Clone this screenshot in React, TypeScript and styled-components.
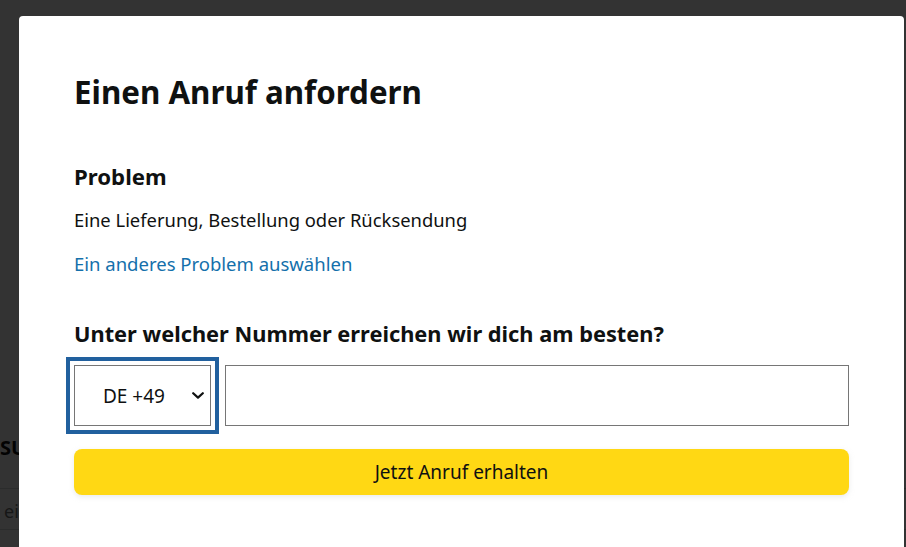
import styled, { createGlobalStyle } from "styled-components";

const GlobalStyle = createGlobalStyle`
	html, body {
		margin: 0;
		padding: 0;
		height: 100%;
		overflow: hidden;
		background: #fff;
		font-family: "Noto Sans", "Liberation Sans", sans-serif;
		color: #0f1111;
	}
	* {
		box-sizing: border-box;
	}
`;

const Chevron = () => (
	<svg width="12" height="7" viewBox="0 0 12 7" fill="none">
		<path
			d="M1.2 1.2 6 5.6l4.8-4.4"
			stroke="#0f1111"
			strokeWidth="2.2"
			strokeLinecap="round"
			strokeLinejoin="round"
		/>
	</svg>
);

export default function App() {
	return (
		<>
			<GlobalStyle />
			{/* page behind the dialog, mostly hidden by it */}
			<Page>
				<PageHeading>SUCHE</PageHeading>
				<SearchField>eingeben</SearchField>
			</Page>
			<Backdrop />
			<Dialog role="dialog" aria-modal="true">
				<Title>Einen Anruf anfordern</Title>
				<SectionTitle>Problem</SectionTitle>
				<Body>Eine Lieferung, Bestellung oder Rücksendung</Body>
				<TextLink href="#">Ein anderes Problem auswählen</TextLink>
				<Question>Unter welcher Nummer erreichen wir dich am besten?</Question>
				<PhoneRow>
					<CountrySelect type="button" $focused>
						<span>DE +49</span>
						<Chevron />
					</CountrySelect>
					<PhoneInput type="tel" aria-label="Telefonnummer" />
				</PhoneRow>
				<PrimaryButton type="button">Jetzt Anruf erhalten</PrimaryButton>
			</Dialog>
		</>
	);
}

const Page = styled.main`
	padding-top: 434px;
`;

const PageHeading = styled.h2`
	margin: 0 0 27px;
	font-size: 20px;
	font-weight: 700;
	color: #0f1111;
`;

const SearchField = styled.div`
	height: 42px;
	border-top: 1px solid #d5d9d9;
	border-bottom: 1px solid #d5d9d9;
	padding: 10px 4px;
	font-size: 18px;
	color: #6f7373;
`;

const Backdrop = styled.div`
	position: fixed;
	inset: 0;
	background: rgba(0, 0, 0, 0.8);
`;

const Dialog = styled.section`
	position: fixed;
	top: 16px;
	left: 19px;
	width: 885px;
	min-height: 600px;
	display: flex;
	flex-direction: column;
	align-items: flex-start;
	padding: 56px 55px 40px;
	background: #fff;
	border-radius: 4px 4px 0 0;
`;

const Title = styled.h1`
	margin: 0;
	font-size: 31.3px;
	line-height: 40px;
	font-weight: 700;
	color: #0f1111;
`;

const SectionTitle = styled.h2`
	margin: 51px 0 0;
	font-size: 22.2px;
	line-height: 28px;
	font-weight: 700;
`;

const Body = styled.p`
	margin: 17px 0 0;
	font-size: 18.4px;
	line-height: 24px;
`;

const TextLink = styled.a`
	margin-top: 20px;
	font-size: 18.5px;
	line-height: 24px;
	color: #1470ab;
	text-decoration: none;
`;

const Question = styled.h2`
	margin: 44px 0 0;
	font-size: 21.8px;
	line-height: 28px;
	font-weight: 700;
`;

const PhoneRow = styled.div`
	margin-top: 17px;
	width: 100%;
	display: flex;
	gap: 14px;
`;

const CountrySelect = styled.button<{ $focused?: boolean }>`
	flex: 0 0 137px;
	height: 61px;
	display: flex;
	align-items: center;
	justify-content: space-between;
	padding: 0 6px 0 28px;
	background: #fff;
	border: 1px solid #767676;
	border-radius: 0;
	font-family: inherit;
	font-size: 19px;
	color: #0f1111;
	box-shadow: ${(p) =>
		p.$focused ? "0 0 0 4px #fff, 0 0 0 8px #21609e" : "none"};
`;

const PhoneInput = styled.input`
	flex: 1;
	height: 61px;
	border: 1px solid #767676;
	border-radius: 0;
	padding: 0 12px;
	font-family: inherit;
	font-size: 18px;
	outline: none;
`;

const PrimaryButton = styled.button`
	margin-top: 23px;
	width: 100%;
	height: 46px;
	border: none;
	border-radius: 8px;
	background: #ffd814;
	box-shadow: 0 2px 5px 0 rgba(213, 217, 217, 0.5);
	font-family: inherit;
	font-size: 19px;
	color: #0f1111;
`;
